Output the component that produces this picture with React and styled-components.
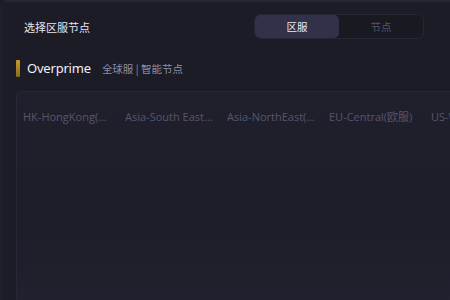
import React, { useState } from "react";
import styled, { createGlobalStyle } from "styled-components";

const GlobalStyle = createGlobalStyle`
  html, body {
    margin: 0;
    padding: 0;
    background: #1b1b25;
    overflow: hidden;
  }
  * { box-sizing: border-box; }
`;

const Modal = styled.div`
  width: 450px;
  height: 300px;
  background: #1c1c27;
  border-top: 2px solid #252533;
  border-left: 3px solid #1f1f2b;
  border-top-left-radius: 6px;
  font-family: "Noto Sans", "Noto Sans CJK SC", sans-serif;
  display: flex;
  flex-direction: column;
  overflow: hidden;
`;

const Header = styled.div`
  display: flex;
  align-items: center;
  justify-content: space-between;
  padding: 11px 26px 0 21px;
  height: 38px;
`;

const Title = styled.div`
  color: #e6e6ee;
  font-size: 11px;
  font-family: "Noto Sans CJK SC", sans-serif;
`;

const Segmented = styled.div`
  display: flex;
  width: 170px;
  height: 25px;
  border-radius: 6px;
  background: #191922;
  border: 1px solid #262634;
  overflow: hidden;
`;

const Seg = styled.button`
  flex: 1;
  border: none;
  margin: 0;
  padding: 0;
  font-family: "Noto Sans CJK SC", sans-serif;
  font-size: 10.5px;
  cursor: pointer;
  border-radius: ${(p) => (p.$active ? "5px" : "0")};
  background: ${(p) => (p.$active ? "#32314a" : "transparent")};
  color: ${(p) => (p.$active ? "#ececf4" : "#55556a")};
`;

const GameRow = styled.div`
  display: flex;
  align-items: center;
  gap: 7px;
  padding: 18px 0 0 13px;
  height: 38px;
`;

const Bar = styled.div`
  width: 4px;
  height: 17px;
  border-radius: 1px;
  background: linear-gradient(180deg, #c79b2e 0%, #8a6a1e 100%);
`;

const GameName = styled.div`
  color: #f0f0f6;
  font-size: 13px;
  letter-spacing: -0.2px;
  font-family: "Noto Sans", sans-serif;
`;

const Sub = styled.div`
  color: #8e8ea4;
  font-size: 10.5px;
  margin-left: 4px;
  font-family: "Noto Sans CJK SC", sans-serif;
`;

const Panel = styled.div`
  flex: 1;
  margin: 13px 0 0 13px;
  border-top-left-radius: 6px;
  border-top: 1px solid #262636;
  border-left: 1px solid #272738;
  background: linear-gradient(180deg, #20202d 0%, #1d1d28 60%, #21212f 100%);
  padding: 16px 0 0 6px;
  overflow: hidden;
`;

const RegionList = styled.div`
  display: flex;
  gap: 14px;
  white-space: nowrap;
`;

const Region = styled.div`
  flex: 0 0 auto;
  width: 88px;
  font-size: 11px;
  color: #56566b;
  font-family: "Open Sans", "Noto Sans CJK SC", sans-serif;
  overflow: hidden;
  text-overflow: ellipsis;
`;

const regions = [
  "HK-HongKong(香港)",
  "Asia-South East(东南亚)",
  "Asia-NorthEast(东北亚)",
  "EU-Central(欧服)",
  "US-West(美西)",
];

export default function App() {
  const [tab, setTab] = useState(0);
  return (
    <>
      <GlobalStyle />
      <Modal>
        <Header>
          <Title>选择区服节点</Title>
          <Segmented>
            <Seg $active={tab === 0} onClick={() => setTab(0)}>区服</Seg>
            <Seg $active={tab === 1} onClick={() => setTab(1)}>节点</Seg>
          </Segmented>
        </Header>
        <GameRow>
          <Bar />
          <GameName>Overprime</GameName>
          <Sub>全球服 | 智能节点</Sub>
        </GameRow>
        <Panel>
          <RegionList>
            {regions.map((r) => (
              <Region key={r}>{r}</Region>
            ))}
          </RegionList>
        </Panel>
      </Modal>
    </>
  );
}
